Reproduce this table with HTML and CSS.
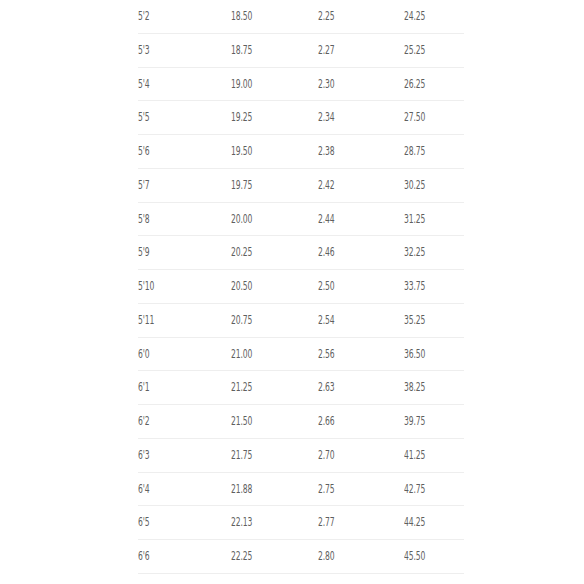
FILE: index.html
```html
<!DOCTYPE html>
<html>
<head>
<meta charset="utf-8">
<link rel="stylesheet" href="styles.css">
</head>
<body>
<div class="page">
<table class="sizes">
<tbody>
<tr><td><span class="v">5'2</span></td><td><span class="v">18.50</span></td><td><span class="v">2.25</span></td><td><span class="v">24.25</span></td></tr>
<tr><td><span class="v">5'3</span></td><td><span class="v">18.75</span></td><td><span class="v">2.27</span></td><td><span class="v">25.25</span></td></tr>
<tr><td><span class="v">5'4</span></td><td><span class="v">19.00</span></td><td><span class="v">2.30</span></td><td><span class="v">26.25</span></td></tr>
<tr><td><span class="v">5'5</span></td><td><span class="v">19.25</span></td><td><span class="v">2.34</span></td><td><span class="v">27.50</span></td></tr>
<tr><td><span class="v">5'6</span></td><td><span class="v">19.50</span></td><td><span class="v">2.38</span></td><td><span class="v">28.75</span></td></tr>
<tr><td><span class="v">5'7</span></td><td><span class="v">19.75</span></td><td><span class="v">2.42</span></td><td><span class="v">30.25</span></td></tr>
<tr><td><span class="v">5'8</span></td><td><span class="v">20.00</span></td><td><span class="v">2.44</span></td><td><span class="v">31.25</span></td></tr>
<tr><td><span class="v">5'9</span></td><td><span class="v">20.25</span></td><td><span class="v">2.46</span></td><td><span class="v">32.25</span></td></tr>
<tr><td><span class="v">5'10</span></td><td><span class="v">20.50</span></td><td><span class="v">2.50</span></td><td><span class="v">33.75</span></td></tr>
<tr><td><span class="v">5'11</span></td><td><span class="v">20.75</span></td><td><span class="v">2.54</span></td><td><span class="v">35.25</span></td></tr>
<tr><td><span class="v">6'0</span></td><td><span class="v">21.00</span></td><td><span class="v">2.56</span></td><td><span class="v">36.50</span></td></tr>
<tr><td><span class="v">6'1</span></td><td><span class="v">21.25</span></td><td><span class="v">2.63</span></td><td><span class="v">38.25</span></td></tr>
<tr><td><span class="v">6'2</span></td><td><span class="v">21.50</span></td><td><span class="v">2.66</span></td><td><span class="v">39.75</span></td></tr>
<tr><td><span class="v">6'3</span></td><td><span class="v">21.75</span></td><td><span class="v">2.70</span></td><td><span class="v">41.25</span></td></tr>
<tr><td><span class="v">6'4</span></td><td><span class="v">21.88</span></td><td><span class="v">2.75</span></td><td><span class="v">42.75</span></td></tr>
<tr><td><span class="v">6'5</span></td><td><span class="v">22.13</span></td><td><span class="v">2.77</span></td><td><span class="v">44.25</span></td></tr>
<tr><td><span class="v">6'6</span></td><td><span class="v">22.25</span></td><td><span class="v">2.80</span></td><td><span class="v">45.50</span></td></tr>
</tbody>
</table>
</div>
</body>
</html>
```
FILE: styles.css
```css
html, body {
  margin: 0;
  padding: 0;
  background: #ffffff;
}
.page {
  padding-left: 138px;
}
.sizes {
  width: 326px;
  border-collapse: collapse;
  font-family: "DejaVu Sans Condensed", "Liberation Sans Narrow", "Roboto", sans-serif;
  font-stretch: condensed;
  font-size: 12.5px;
  color: #5f5f5f;
}
.sizes td {
  height: 32.76px;
  padding: 0;
  border-bottom: 1px solid #eeeeee;
  vertical-align: middle;
  text-align: left;
  line-height: 1;
}
.sizes td:nth-child(1) { width: 93px; }
.sizes td:nth-child(2) { width: 87px; }
.sizes td:nth-child(3) { width: 86px; }
.sizes td:nth-child(4) { width: 60px; }
.v {
  display: inline-block;
  transform: scaleX(0.68);
  transform-origin: left center;
  letter-spacing: -0.2px;
}
```
